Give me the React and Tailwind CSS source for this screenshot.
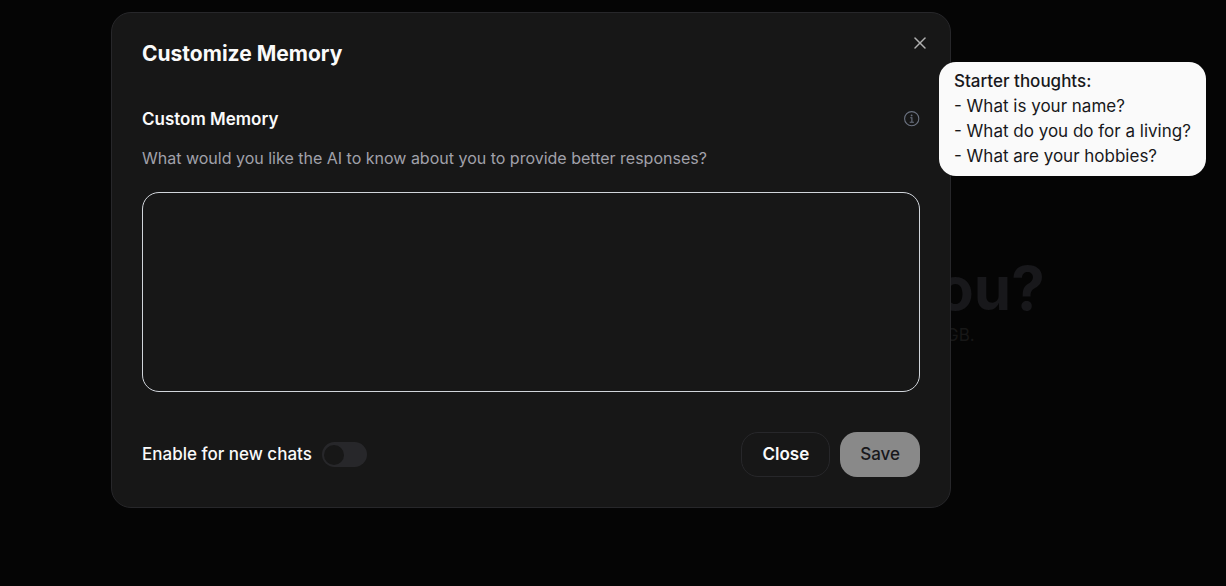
import React, { useState } from 'react';
import { X } from 'lucide-react';

const thoughts = ['What is your name?', 'What do you do for a living?', 'What are your hobbies?'];

const InfoIcon = () => (
  <svg className="block h-4 w-4" viewBox="0 0 16 16" fill="none" stroke="currentColor" aria-hidden="true">
    <circle cx="7.7" cy="7.7" r="7.1" strokeWidth="1.1" />
    <path d="M6.2 6.8h1.7v4.2M5.7 11.2h4.2" strokeWidth="1.1" />
    <circle cx="7.6" cy="4.4" r="0.9" fill="currentColor" stroke="none" />
  </svg>
);

const App = () => {
  const [memory, setMemory] = useState('');
  const [enabled, setEnabled] = useState(false);

  return (
    <div className="relative min-h-screen bg-[#050505] py-3 pl-[111px] pr-5 font-['Inter',sans-serif] text-[17px] text-[#fafafa]">
      {/* Page behind the dialog */}
      <div aria-hidden="true" className="absolute left-[902px] top-[252px] text-[#18181b]">
        <p className="text-6xl font-bold leading-[72px]">you?</p>
        <p className="pl-11 leading-[22px] text-[#171717]">GB.</p>
      </div>

      <div
        role="dialog"
        aria-labelledby="dialog-title"
        className="relative w-full max-w-[840px] rounded-[20px] border border-[#27272a] bg-[#171717] p-[30px]"
      >
        <h2 id="dialog-title" className="text-[21px] font-bold leading-[22px]">
          Customize Memory
        </h2>
        <button type="button" aria-label="Dismiss" className="absolute right-5 top-5 text-[#b0b0b0]">
          <X className="h-5 w-5" strokeWidth={1.8} />
        </button>

        <div className="mt-10 flex items-center justify-between">
          <label htmlFor="memory" className="font-semibold leading-7">
            Custom Memory
          </label>
          <div className="relative">
            <button type="button" aria-label="Info" className="block text-[#6b7280]">
              <InfoIcon />
            </button>
            <div
              role="tooltip"
              className="absolute left-full top-1/2 ml-[19px] -translate-y-1/2 whitespace-nowrap rounded-[17px] bg-[#fafafa] px-[15px] py-[7px] text-[17px] leading-[25px] text-[#18181b]"
            >
              <p className="font-medium">Starter thoughts:</p>
              {thoughts.map((thought) => (
                <p key={thought}>- {thought}</p>
              ))}
            </div>
          </div>
        </div>

        <p className="mt-3 text-base leading-[27px] text-[#a1a1aa]">
          What would you like the AI to know about you to provide better responses?
        </p>
        <textarea
          id="memory"
          value={memory}
          onChange={(e) => setMemory(e.target.value)}
          className="mt-5 block h-[200px] w-full resize-none rounded-[17px] border border-[#d1d5db] bg-transparent px-4 py-3 text-base outline-none"
        />

        <div className="mt-10 flex items-center justify-between">
          <div className="flex items-center gap-2.5">
            <label htmlFor="enable" className="font-medium">
              Enable for new chats
            </label>
            <input
              id="enable"
              type="checkbox"
              role="switch"
              checked={enabled}
              onChange={(e) => setEnabled(e.target.checked)}
              className="flex h-[25px] w-[45px] appearance-none items-center rounded-full bg-[#27272a] px-0.5 before:h-5 before:w-5 before:rounded-full before:bg-[#171717] checked:justify-end checked:bg-[#fafafa]"
            />
          </div>
          <div className="flex gap-2.5">
            <button type="button" className="h-[45px] rounded-[17px] border border-[#27272a] px-5 font-semibold">
              Close
            </button>
            <button
              type="button"
              disabled={!memory}
              className="h-[45px] rounded-[17px] bg-[#fafafa] px-5 font-medium text-[#18181b] disabled:bg-[#898989]"
            >
              Save
            </button>
          </div>
        </div>
      </div>
    </div>
  );
};

export default App;
